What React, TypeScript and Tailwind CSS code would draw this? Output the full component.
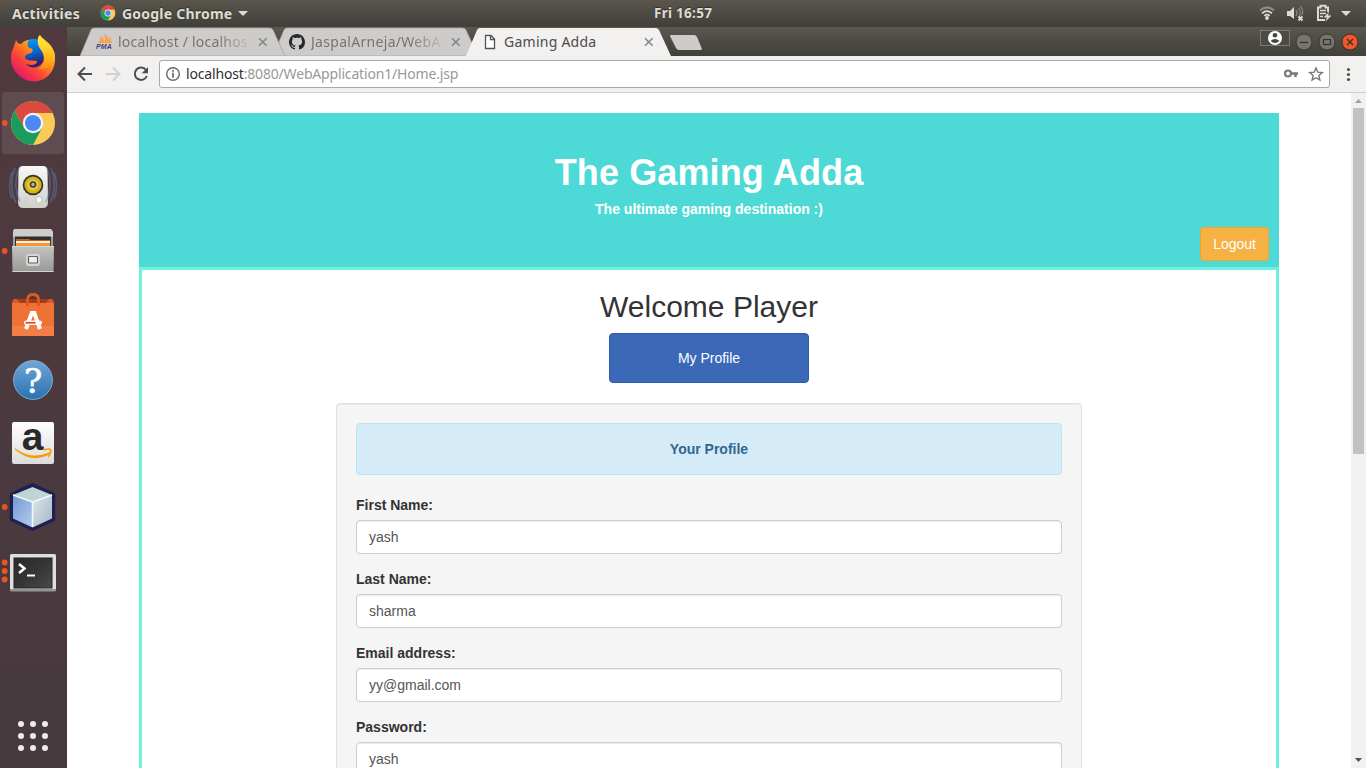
import type { ReactNode } from "react";

const UI = "font-['Noto_Sans','Open_Sans',sans-serif]";

function ChromeLogo({ cx, cy, r }: { cx: number; cy: number; r: number }) {
  return (
    <g transform={`translate(${cx} ${cy}) scale(${r / 22})`}>
      <circle r="22" fill="#fbcb55" />
      <path d="M-18.500-11.900A22 22 0 0 1 19.700-10H0L-8.700 5Z" fill="#d84b3e" />
      <path d="M-18.500-11.900A22 22 0 0 0 0 22L9 5L0 10L-8.700 5Z" fill="#1b9c5d" />
      <circle r="10.200" fill="#f4f4f4" />
      <circle r="8" fill="#4a89f3" />
    </g>
  );
}

function LauncherItem({
  index,
  active,
  children,
}: {
  index: number;
  active?: boolean;
  children: ReactNode;
}) {
  return (
    <div className="h-16 w-[67px] shrink-0">
      <svg width="67" height="64" viewBox={`0 ${27 + index * 64} 67 64`} className="block overflow-visible">
        {active && <rect x="2" y="92" width="62" height="62" rx="3" fill="#5e4c51" />}
        {children}
      </svg>
    </div>
  );
}

function Launcher() {
  return (
    <aside className="flex w-[67px] shrink-0 flex-col bg-gradient-to-b from-[#50393f] to-[#463a3e]">
      <LauncherItem index={0}>
        <defs>
          <linearGradient id="fox" x1="0.85" y1="0.1" x2="0.2" y2="0.9">
            <stop offset="0" stopColor="#ffe13b" />
            <stop offset="0.35" stopColor="#ff9a16" />
            <stop offset="0.7" stopColor="#fc4139" />
            <stop offset="1" stopColor="#e4186f" />
          </linearGradient>
          <linearGradient id="globe" x1="0.3" y1="0" x2="0.5" y2="0.8">
            <stop offset="0" stopColor="#0a9cf5" />
            <stop offset="0.6" stopColor="#0760c8" />
            <stop offset="1" stopColor="#31206f" />
          </linearGradient>
          <linearGradient id="foxTail" x1="0" y1="0" x2="0" y2="1">
            <stop offset="0" stopColor="#fff14a" />
            <stop offset="0.55" stopColor="#ffc21f" />
            <stop offset="1" stopColor="#ff8a14" />
          </linearGradient>
        </defs>
        <circle cx="33.500" cy="54.500" r="15.500" fill="url(#globe)" />
        <path d="M16 40C17 42 18 44 21 44C24 41 26 40 29 40C27 43 27 45 29 48C33 48 34 51 31 53C27 54 25 55 25 58C28 62 33 60 37 61C37 65 31 66 26 64C30 69 39 69 43 62C45 57 43 52 40 48C37 42 37 37 40 35C43 40 51 42 54 52C58 66 50 81 34 81.500C20 81 10 69 11 57C11 51 14 48 16 40Z" fill="url(#fox)" />
        <path d="M40 35C36 41 38 46 41 50C46 56 46 63 39 69C49 69 54 65 55 57C56 46 41 43 40 35Z" fill="url(#foxTail)" />
      </LauncherItem>

      <LauncherItem index={1} active>
        <ChromeLogo cx={33} cy={123} r={22} />
        <circle cx="4.700" cy="123" r="2.900" fill="#e95420" />
      </LauncherItem>

      <LauncherItem index={2}>
        <defs>
          <linearGradient id="speaker" x1="0" y1="0" x2="0" y2="1">
            <stop offset="0" stopColor="#f8f8f6" />
            <stop offset="1" stopColor="#cfcfcc" />
          </linearGradient>
        </defs>
        <path d="M23 166H43Q47 166 47.500 170L48 202Q48 208 43 208H23Q18 208 18 202L18.500 170Q19 166 23 166Z" fill="url(#speaker)" />
        <circle cx="33" cy="185" r="10.300" fill="#34342f" />
        <circle cx="33" cy="185" r="8.600" fill="#d3b21a" />
        <circle cx="33" cy="185" r="5.600" fill="#e6cb3c" />
        <circle cx="33" cy="184.500" r="3.300" fill="#3f3f3a" />
        <circle cx="33" cy="184.500" r="1.700" fill="#b7b7ad" />
        <rect x="36" y="196.500" width="6" height="6.500" rx="2.500" fill="#f7f7f7" stroke="#aaa" strokeWidth="0.700" />
        <circle cx="26" cy="200" r="2" fill="none" stroke="#c9c9c6" strokeWidth="0.700" />
        <g fill="none" stroke="#5d7dac" strokeWidth="1.600" opacity="0.5">
          <path d="M19 168Q12 185 20 202M15 168Q8 186 16 203M12 172Q7 186 12 199M47 168Q54 185 46 202M51 168Q58 186 50 203M54 172Q59 186 54 199" />
        </g>
      </LauncherItem>

      <LauncherItem index={3}>
        <defs>
          <linearGradient id="cabinet" x1="0" y1="0" x2="0" y2="1">
            <stop offset="0" stopColor="#c3c3c1" />
            <stop offset="1" stopColor="#999997" />
          </linearGradient>
        </defs>
        <path d="M14 229H51L53 232V272H13V232Z" fill="#a0a09e" />
        <path d="M14 229H51L53 232V237H13V232Z" fill="#cdcdcb" />
        <rect x="15" y="236.500" width="36" height="10" fill="#30302e" />
        <path d="M16 239H29L31 240H50V247H16Z" fill="#c65c22" />
        <path d="M16 241H50V243H16Z" fill="#fff3d4" />
        <path d="M16 243H50V247H16Z" fill="#f09a3c" />
        <path d="M12 246H54L53.500 272H12.500Z" fill="url(#cabinet)" />
        <path d="M12 246.500H54M12.500 271.500H53.500" stroke="#d4d4d2" />
        <rect x="26" y="254" width="14" height="12" rx="3" fill="#d6d6d4" />
        <rect x="28.500" y="256.500" width="9" height="6.500" rx="0.500" fill="#eee" stroke="#626260" strokeWidth="1.200" />
        <circle cx="4.700" cy="251" r="2.900" fill="#e95420" />
      </LauncherItem>

      <LauncherItem index={4}>
        <path d="M12 301L14 299H52L54 301V336H12Z" fill="#a43d17" />
        <path d="M12 303H54V336H12Z" fill="#ee7136" />
        <path d="M12 303L14 299H17L20 303ZM54 303L52 299H49L46 303Z" fill="#d85a25" />
        <path d="M12 326H54V336H12Z" fill="#f47e48" />
        <path d="M27.500 306V299Q28 294.500 33 294.500Q38 294.500 38.500 299V306" fill="none" stroke="#e2561f" strokeWidth="2.800" />
        <path d="M26 329L31.700 313H34.300L40 329" fill="none" stroke="#fff" strokeWidth="4" />
        <rect x="24" y="320.500" width="18" height="4.500" rx="2.200" fill="#fff" />
        <path d="M25.500 322.800H35.500" stroke="#df521d" strokeWidth="1.800" />
      </LauncherItem>

      <LauncherItem index={5}>
        <defs>
          <linearGradient id="help" x1="0" y1="0" x2="0" y2="1">
            <stop offset="0" stopColor="#72a5d9" />
            <stop offset="1" stopColor="#2872b1" />
          </linearGradient>
        </defs>
        <circle cx="33" cy="380" r="19.400" fill="url(#help)" stroke="#82aad2" strokeWidth="1" />
        <text x="33" y="393" fill="#fff" stroke="#fff" strokeWidth="0.700" textAnchor="middle" className="font-['DejaVu_Serif',serif] text-[34px]">?</text>
      </LauncherItem>

      <LauncherItem index={6}>
        <defs>
          <linearGradient id="amazonTile" x1="0" y1="0" x2="0" y2="1">
            <stop offset="0" stopColor="#fff" />
            <stop offset="1" stopColor="#dcdcdc" />
          </linearGradient>
        </defs>
        <rect x="12" y="422" width="42" height="42" rx="2" fill="url(#amazonTile)" />
        <text x="32.500" y="450" fill="#292929" textAnchor="middle" className="font-['Liberation_Sans',sans-serif] text-[39px] font-bold">a</text>
        <path d="M15 449Q31 461 49 453L48 454.500Q32 463 15 449Z" fill="#ff9900" stroke="#ff9900" strokeWidth="1.200" />
        <path d="M44 450Q49 448 51 450Q51 454 48 457" fill="none" stroke="#ff9900" strokeWidth="1.500" />
      </LauncherItem>

      <LauncherItem index={7}>
        <defs>
          <linearGradient id="cubeLeft" x1="0" y1="0" x2="1" y2="1">
            <stop offset="0" stopColor="#7697d4" />
            <stop offset="1" stopColor="#b1ceef" />
          </linearGradient>
          <linearGradient id="cubeRight" x1="0" y1="0" x2="1" y2="1">
            <stop offset="0" stopColor="#dde9ee" />
            <stop offset="1" stopColor="#a2b6c3" />
          </linearGradient>
        </defs>
        <path d="M32.500 486L52.500 495V519L32.500 528L12.500 519V495Z" fill="#202050" stroke="#202050" strokeWidth="5.500" strokeLinejoin="round" />
        <path d="M32.500 487L52 495L32.500 502L13 495Z" fill="#bed5d5" />
        <path d="M13 495L32.500 502V527.500L13 518.500Z" fill="url(#cubeLeft)" />
        <path d="M52 495L32.500 502V527.500L52 518.500Z" fill="url(#cubeRight)" />
        <path d="M13 495L32.500 502L52 495M32.500 502V527" stroke="#f3f8fb" strokeWidth="1.500" fill="none" />
        <circle cx="4.700" cy="507" r="2.900" fill="#e95420" />
      </LauncherItem>

      <LauncherItem index={8}>
        <defs>
          <linearGradient id="term" x1="0" y1="0" x2="1" y2="1">
            <stop offset="0" stopColor="#2a2a2a" />
            <stop offset="0.5" stopColor="#353535" />
            <stop offset="1" stopColor="#4a4a4a" />
          </linearGradient>
        </defs>
        <rect x="10" y="554" width="46" height="37" rx="1.500" fill="#dededc" />
        <path d="M10 589H56V590.500Q56 591.500 54 591.500H12Q10 591.500 10 590Z" fill="#949492" />
        <rect x="14" y="558" width="38" height="30" fill="url(#term)" stroke="#222" />
        <path d="M19 564L24.500 568.500L19 573" fill="none" stroke="#fff" strokeWidth="2.500" />
        <path d="M27 575.500H35" fill="none" stroke="#fff" strokeWidth="2" />
        <circle cx="4.700" cy="562.500" r="2.900" fill="#e95420" />
        <circle cx="4.700" cy="571" r="2.900" fill="#e95420" />
        <circle cx="4.700" cy="579.500" r="2.900" fill="#e95420" />
      </LauncherItem>

      <div className="mt-auto flex h-16 pl-[18px]">
        <div className="grid h-[30px] grid-cols-3 gap-1.5 pt-[17px]">
          {Array.from({ length: 9 }, (_, i) => (
            <span key={i} className="size-1.5 rounded-full bg-[#eeecec]" />
          ))}
        </div>
      </div>
    </aside>
  );
}

function TopBar() {
  return (
    <header
      className={`${UI} flex h-[27px] shrink-0 bg-gradient-to-b from-[#5a564e] to-[#403f39] text-[14px] leading-[27px] font-bold text-[#dfdbd2] [text-shadow:0_-1px_1px_#302f2b]`}
    >
      <span className="w-[100px] pl-3 text-[14px] tracking-[0.3px]">Activities</span>
      <svg width="22" height="27" viewBox="100 0 22 27">
        <ChromeLogo cx={108} cy={13} r={7.4} />
      </svg>
      <span className="w-[112px] text-[14px] tracking-[0.22px]">Google Chrome</span>
      <svg width="14" height="27" viewBox="234 0 14 27">
        <path d="M238 11H248L243 16Z" fill="#dfdbd2" />
      </svg>
      <span className="ml-[406px] text-[13.500px] tracking-[0.28px]">Fri 16:57</span>
      <svg width="110" height="27" viewBox="1256 0 110 27" className="ml-auto" fill="none" stroke="#dfdbd2">
        <path d="M1260 10.500Q1267 4.500 1274 10.500" strokeWidth="1.800" opacity="0.45" />
        <path d="M1262 13.300Q1267 9 1272 13.300M1264.300 15.800Q1267 13.500 1269.700 15.800" strokeWidth="1.700" />
        <circle cx="1267" cy="18" r="1.900" fill="#dfdbd2" stroke="none" />
        <path d="M1287 11H1290L1294 7V19L1290 16H1287Z" fill="#dfdbd2" stroke="none" />
        <path d="M1296 10Q1298 13 1296 16M1298.500 8Q1302 13 1298.500 18M1300.500 6Q1304 11 1301.800 15" strokeWidth="1.300" opacity="0.4" />
        <path d="M1298.500 16.500L1302.500 20.500M1302.500 16.500L1298.500 20.500" strokeWidth="1.900" />
        <path d="M1325 20H1318V7.500H1320.500V5.800H1325.500V7.500H1328V12" strokeWidth="2" />
        <path d="M1320 10.500H1326M1320 13.500H1326M1320 16.500H1323" strokeWidth="1.600" />
        <path d="M1329 12L1323.500 17.500H1327L1325.500 21.500L1331.500 15.500H1328Z" fill="#dfdbd2" stroke="none" />
        <path d="M1341 11H1351L1346 16Z" fill="#dfdbd2" stroke="none" />
      </svg>
    </header>
  );
}

function Tab({
  title,
  icon,
  active,
  className,
}: {
  title: string;
  icon: ReactNode;
  active?: boolean;
  className: string;
}) {
  return (
    <div className={`relative flex h-[29px] w-[193px] shrink-0 ${className}`}>
      <svg width="206" height="29" viewBox="0 0 206 29" className="absolute top-0 left-0">
        <path
          d="M0 29L11 3Q12 1 14 1H189Q192 1 193 3L205 29Z"
          fill={active ? "#f2f1f0" : "#cecccb"}
          stroke={active ? "none" : "#a5a39f"}
          strokeWidth="0.8"
        />
      </svg>
      <div className="relative flex w-full items-center">
        <svg width="22" height="29" viewBox="0 0 22 29" className="ml-4 shrink-0">
          {icon}
        </svg>
        <span
          className={`w-[137px] whitespace-nowrap ${
            active
              ? "text-[#4c4c4c]"
              : "text-[#77736f] [mask-image:linear-gradient(to_right,black_72%,transparent_100%)]"
          }`}
        >
          {title}
        </span>
        <svg width="16" height="29" viewBox="0 0 16 29" className="shrink-0">
          <path d="M4 11.200L11.600 18.800M11.600 11.200L4 18.800" stroke="#858585" strokeWidth="1.600" />
        </svg>
      </div>
    </div>
  );
}

function TabStrip() {
  return (
    <div className={`${UI} flex h-[29px] shrink-0 bg-gradient-to-b from-[#5a584f] to-[#403f39] pl-[13px] text-[14px]`}>
      <Tab
        title="localhost / localhos"
        className="z-10 tracking-[0.2px]"
        icon={
          <>
            <path d="M2 16C4 13 5 11 4 9Q9 11 8 16ZM8 16Q10 12 8 7Q13 9 13 16ZM13 16L13 9Q16 12 16 16Z" fill="#f5a34d" />
            <text x="0" y="22" fill="#454279" className="font-['Liberation_Sans',sans-serif] text-[7px] font-bold tracking-[0.1px] italic">
              PMA
            </text>
          </>
        }
      />
      <Tab
        title="JaspalArneja/WebA"
        className="tracking-[0.3px]"
        icon={
          <g transform="translate(0 7)">
            <path
              fill="#24292e"
              d="M8 0C3.580 0 0 3.580 0 8c0 3.540 2.290 6.530 5.470 7.590.4.070.55-.17.55-.38 0-.19-.01-.82-.01-1.490-2.010.37-2.530-.49-2.690-.94-.09-.23-.48-.94-.82-1.130-.28-.15-.68-.52-.01-.53.63-.01 1.080.58 1.230.82.72 1.210 1.870.87 2.330.66.07-.52.28-.87.51-1.070-1.780-.2-3.640-.89-3.640-3.950 0-.87.31-1.590.82-2.150-.08-.2-.36-1.020.08-2.120 0 0 .67-.21 2.200.82.64-.18 1.320-.27 2-.27s1.360.09 2 .27c1.530-1.040 2.200-.82 2.200-.82.44 1.100.16 1.920.08 2.120.51.56.82 1.270.82 2.150 0 3.070-1.870 3.750-3.650 3.950.29.25.54.73.54 1.480 0 1.070-.01 1.930-.01 2.200 0 .21.15.46.55.38A8.010 8.010 0 0 0 16 8c0-4.420-3.580-8-8-8Z"
            />
          </g>
        }
      />
      <Tab
        active
        title="Gaming Adda"
        className="z-20 tracking-[0.25px]"
        icon={<path d="M3.500 8.500H9L12.500 12V21.500H3.500ZM8.500 8.500V12.500H12.500" fill="#fff" stroke="#555" strokeWidth="1.300" />}
      />
      <svg width="40" height="29" viewBox="666 27 40 29" className="ml-[7px]">
        <path d="M671 35H694Q696 35 697 37L702 49Q702 50 700 50H679Q677 50 676 48L670 36Q670 35 671 35Z" fill="#cecccb" />
      </svg>
      <svg width="110" height="29" viewBox="1256 27 110 29" className="ml-auto">
        <rect x="1260.500" y="30.500" width="29" height="15" fill="#4b4a43" stroke="#7c7b74" />
        <circle cx="1275" cy="38" r="7" fill="#fff" />
        <circle cx="1275" cy="35.300" r="2.300" fill="#45443e" />
        <path d="M1270.500 41Q1275 37 1279.500 41Q1275 45 1270.500 41Z" fill="#45443e" />
        <circle cx="1304" cy="42" r="8" fill="#76756f" stroke="#383731" />
        <path d="M1300 42.500H1308" stroke="#35342f" strokeWidth="1.300" />
        <circle cx="1327" cy="42" r="8" fill="#76756f" stroke="#383731" />
        <rect x="1323.500" y="39.500" width="7" height="5" fill="none" stroke="#35342f" strokeWidth="1.200" />
        <circle cx="1350" cy="42" r="8" fill="#f1562c" stroke="#3f302a" />
        <path d="M1347 39L1353 45M1353 39L1347 45" stroke="#3d2a22" strokeWidth="1.300" />
      </svg>
    </div>
  );
}

function Toolbar() {
  return (
    <div className={`${UI} flex h-[37px] shrink-0 items-center border-b border-[#cfcecd] bg-[#f2f1f0]`}>
      <svg width="92" height="36" viewBox="67 56 92 36" className="shrink-0" fill="none" strokeWidth="2">
        <path d="M92 74H79M85 67.500L78.500 74L85 80.500" stroke="#4e4e4e" />
        <path d="M106 74H119M113 67.500L119.500 74L113 80.500" stroke="#cfcfcf" />
        <path d="M146 70A6.200 6.200 0 1 0 146.800 76" stroke="#4e4e4e" />
        <path d="M148 67V73.300H141.700Z" fill="#4e4e4e" />
      </svg>
      <div className="flex h-7 w-[1171px] shrink-0 items-center rounded-[3px] border border-[#a9a8a7] bg-white">
        <svg width="26" height="26" viewBox="160 61 26 26" fill="none">
          <circle cx="173" cy="74" r="6.300" stroke="#686868" strokeWidth="1.400" />
          <path d="M173 72.700V77.700M173 70V71.700" stroke="#686868" strokeWidth="1.700" />
        </svg>
        <span className="text-[14px] leading-[26px] tracking-[-0.17px] whitespace-nowrap text-[#999]">
          <span className="text-[#303030]">localhost</span>:8080/WebApplication1/Home.jsp
        </span>
        <svg width="50" height="26" viewBox="1279 61 50 26" className="ml-auto" fill="none">
          <circle cx="1288" cy="73.500" r="3" stroke="#7a7a7a" strokeWidth="2.200" />
          <path d="M1291 73.500H1298M1295.500 74V77" stroke="#7a7a7a" strokeWidth="2.500" />
          <path d="M1316 68L1317.800 72.200L1322.300 72.600L1318.900 75.600L1319.900 80L1316 77.700L1312.100 80L1313.100 75.600L1309.700 72.600L1314.200 72.200Z" stroke="#777" strokeWidth="1.400" />
        </svg>
      </div>
      <svg width="36" height="36" viewBox="1330 56 36 36" fill="#505050">
        <circle cx="1348.500" cy="69.500" r="1.600" />
        <circle cx="1348.500" cy="74.500" r="1.600" />
        <circle cx="1348.500" cy="79.500" r="1.600" />
      </svg>
    </div>
  );
}

function Field({ label, value }: { label: string; value: string }) {
  return (
    <div className="mb-[15px]">
      <label className="mb-[5px] block h-5 font-bold">{label}</label>
      <div className="flex h-[34px] items-center rounded-sm border border-[#ccc] bg-white px-3 text-[#555] shadow-[inset_0_1px_1px_rgba(0,0,0,0.075)]">
        {value}
      </div>
    </div>
  );
}

function Page() {
  return (
    <main className="flex min-h-0 flex-1 overflow-hidden bg-white font-['Liberation_Sans',sans-serif] text-sm leading-5 text-[#333]">
      <div className="flex min-w-0 flex-1 justify-center pt-5">
        <div className="flex h-[900px] w-[1140px] flex-col">
          <div className="flex h-[154px] shrink-0 flex-col items-center bg-[#4dd9d5] pt-10 font-bold text-white">
            <h1 className="text-[36px] leading-[40px] tracking-[0.13px]">The Gaming Adda</h1>
            <p className="mt-1.5 leading-5">The ultimate gaming destination :)</p>
            <button className="mt-2 mr-2.5 h-[34px] self-end rounded-sm border border-[#f0a52a] bg-[#f5b144] px-3 font-normal">
              Logout
            </button>
          </div>
          <div className="flex flex-1 flex-col items-center border-[3px] border-[#70f0df]">
            <h2 className="mt-5 text-[30px] leading-[33px]">Welcome Player</h2>
            <button className="mt-2.5 h-[50px] w-[200px] shrink-0 rounded-sm border border-[#2e5ca8] bg-[#3b69b8] text-white">
              My Profile
            </button>
            <section className="mt-5 h-[600px] w-[746px] shrink-0 rounded-sm border border-[#e0e0e0] bg-[#f5f5f5] p-[19px] shadow-[inset_0_1px_1px_rgba(0,0,0,0.05)]">
              <div className="mb-5 flex h-[52px] items-center justify-center rounded-sm border border-[#b5e8f1] bg-[#d6ebf8] font-bold text-[#31688f]">
                Your Profile
              </div>
              <Field label="First Name:" value="yash" />
              <Field label="Last Name:" value="sharma" />
              <Field label="Email address:" value="yy@gmail.com" />
              <Field label="Password:" value="yash" />
            </section>
          </div>
        </div>
      </div>
      <div className="flex w-[15px] shrink-0 flex-col bg-[#f1f1f1] px-0.5">
        <svg width="11" height="15" viewBox="0 0 11 15">
          <path d="M2 10L5.500 6L9 10Z" fill="#a3a3a3" />
        </svg>
        <div className="h-[346px] bg-[#c1c1c1]" />
        <svg width="11" height="15" viewBox="0 0 11 15" className="mt-auto">
          <path d="M2 5L5.500 9L9 5Z" fill="#505050" />
        </svg>
      </div>
    </main>
  );
}

export default function App() {
  return (
    <div className="flex h-[768px] w-[1366px] flex-col overflow-hidden">
      <TopBar />
      <div className="flex min-h-0 flex-1">
        <Launcher />
        <div className="flex min-w-0 flex-1 flex-col">
          <TabStrip />
          <Toolbar />
          <Page />
        </div>
      </div>
    </div>
  );
}
